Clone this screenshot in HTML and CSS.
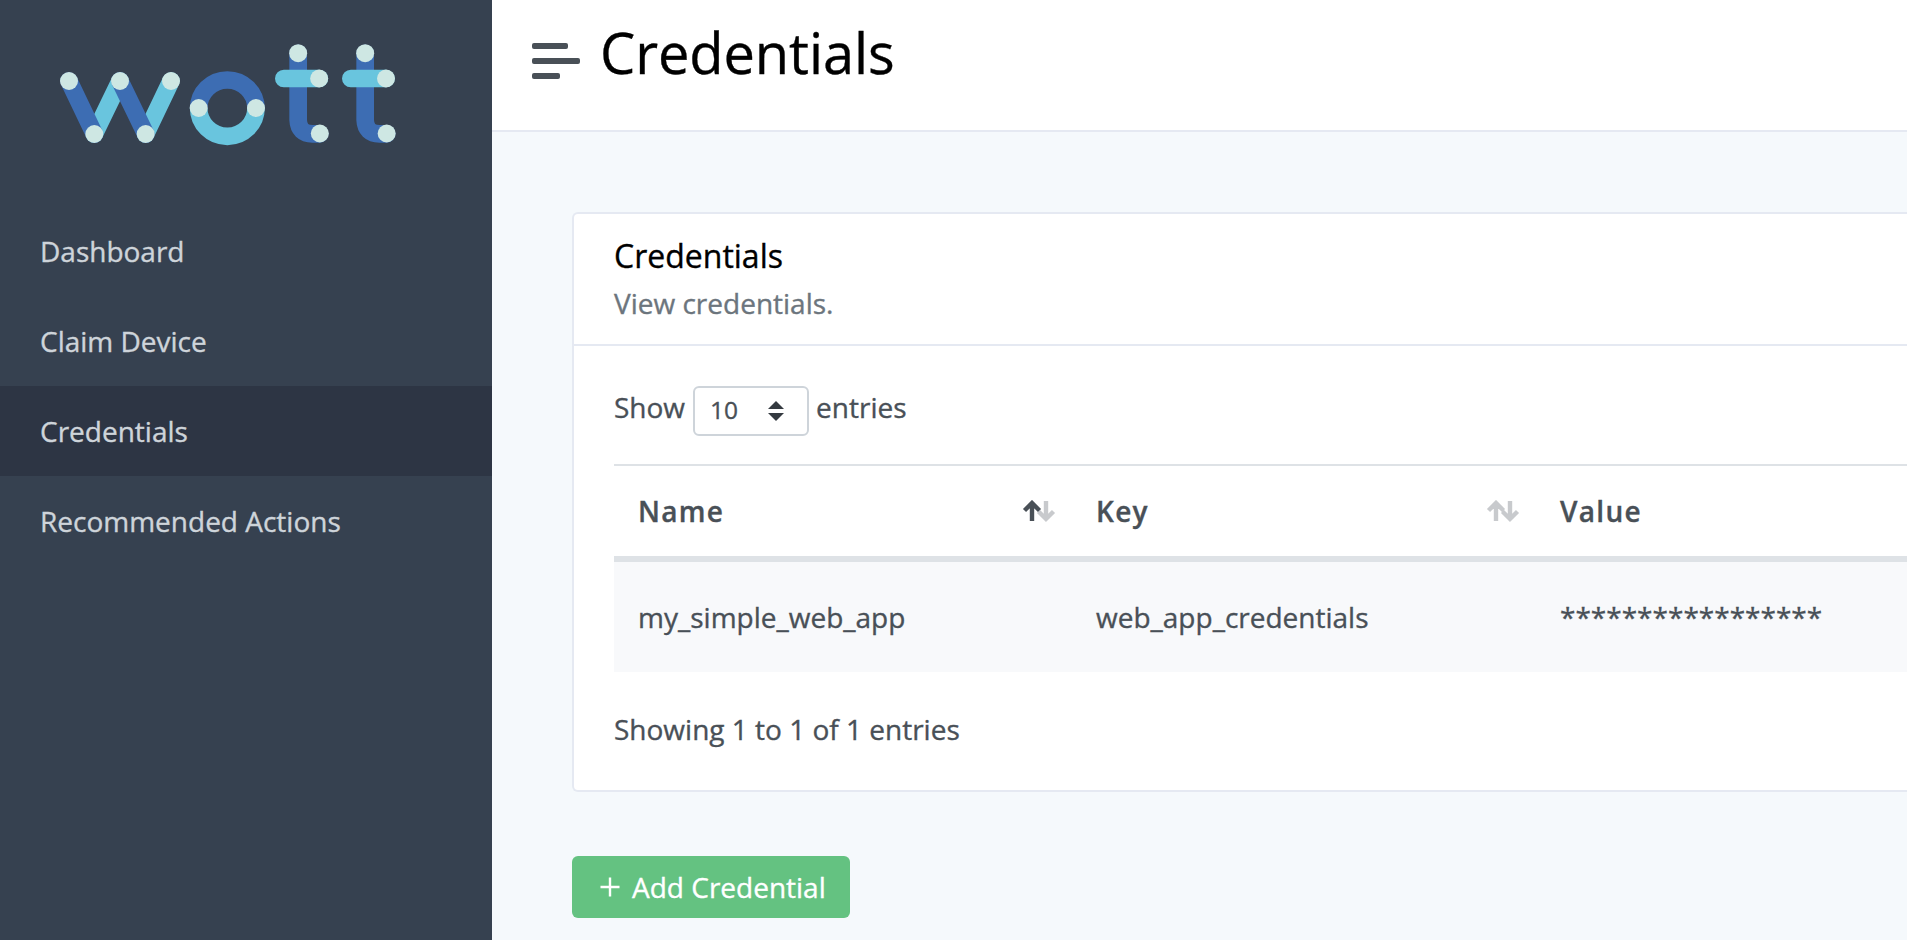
FILE: index.html
```html
<!DOCTYPE html>
<html lang="en">
<head>
<meta charset="utf-8">
<title>Credentials</title>
<link rel="stylesheet" href="styles.css">
</head>
<body>
<div class="app">
  <aside class="sidebar">
    <a class="brand" aria-label="wott">
      <svg class="logo" viewBox="0 0 1140 390" width="380" height="130">
        <g fill="none" stroke-width="53" stroke-linecap="round">
          <path stroke="#69c5de" d="M240 153L163 312M393 153L317 312"/>
          <path stroke="#3d6db3" d="M87 153L163 312M240 153L317 312"/>
          <path stroke="#69c5de" stroke-linecap="butt" d="M476 234a86 85 0 0 0 172 0"/>
          <path stroke="#3d6db3" stroke-linecap="butt" d="M476 235a86 85 0 0 1 172 0"/>
          <path stroke="#3d6db3" d="M774.500 70V270Q776 311 818 311.500H839M975.500 70V270Q977 311 1019 311.500H1040"/>
          <path stroke="#69c5de" d="M731.500 145.500H838M932.500 145.500H1038"/>
        </g>
        <g fill="#cee7e3">
          <circle cx="87" cy="153" r="27"/><circle cx="163" cy="312" r="27"/>
          <circle cx="240" cy="153" r="27"/><circle cx="317" cy="312" r="27"/>
          <circle cx="393" cy="153" r="27"/><circle cx="476" cy="234" r="27"/>
          <circle cx="648" cy="234" r="27"/><circle cx="774.500" cy="69.500" r="27"/>
          <circle cx="837.500" cy="145.500" r="27"/><circle cx="839.500" cy="310.500" r="27"/>
          <circle cx="975.500" cy="69.500" r="27"/><circle cx="1038" cy="145.500" r="27"/>
          <circle cx="1040" cy="310.500" r="27"/>
        </g>
      </svg>
    </a>
    <nav class="nav">
      <a class="nav-link">Dashboard</a>
      <a class="nav-link">Claim Device</a>
      <a class="nav-link active">Credentials</a>
      <a class="nav-link">Recommended Actions</a>
    </nav>
  </aside>
  <div class="main">
    <header class="navbar">
      <div class="hamburger"><span class="bar bar-top"></span><span class="bar"></span><span class="bar bar-bottom"></span></div>
      <h1 class="page-title">Credentials</h1>
    </header>
    <main class="content">
      <section class="card">
        <div class="card-header">
          <h2 class="card-title">Credentials</h2>
          <p class="card-subtitle">View credentials.</p>
        </div>
        <div class="card-body">
          <div class="length">
            <span>Show</span>
            <div class="select"><span>10</span>
              <svg width="16" height="20" viewBox="0 0 16 20" fill="#343a40"><path d="M8 0L16 8H0zM8 20L0 12H16z"/></svg>
            </div>
            <span>entries</span>
          </div>
          <div class="table">
            <div class="row head">
              <div class="cell">Name
                <svg class="sort" width="34" height="24" viewBox="0 0 34 24" fill="none" stroke-width="4.400"><path stroke="#c8cacd" d="M24 1V20M16.500 11.500L24 19L31.500 11.500"/><path stroke="#495057" d="M10 21V3M2.500 10.500L10 3L17.500 10.500"/></svg>
              </div>
              <div class="cell">Key
                <svg class="sort" width="34" height="24" viewBox="0 0 34 24" fill="none" stroke-width="4.400"><path stroke="#c8cacd" d="M24 1V20M16.500 11.500L24 19L31.500 11.500M10 21V3M2.500 10.500L10 3L17.500 10.500"/></svg>
              </div>
              <div class="cell">Value</div>
            </div>
            <div class="row item">
              <div class="cell">my_simple_web_app</div>
              <div class="cell">web_app_credentials</div>
              <div class="cell">*****************</div>
            </div>
          </div>
          <p class="info">Showing 1 to 1 of 1 entries</p>
        </div>
      </section>
      <button class="btn">
        <svg width="20" height="20" viewBox="0 0 20 20" stroke="#fff" stroke-width="2.400"><path d="M10 0.500V19.500M0.500 10H19.500"/></svg>
        <span>Add Credential</span>
      </button>
    </main>
  </div>
</div>
</body>
</html>
```
FILE: styles.css
```css
* { box-sizing: border-box; }
body {
  margin: 0;
  font: 28px/42px "Open Sans", "Noto Sans", sans-serif;
  color: #495057;
  overflow: hidden;
  -webkit-text-stroke: 0.35px currentColor;
}
h1, h2, p { margin: 0; font-weight: 400; }
.app { display: flex; height: 940px; background: #f5f9fc; }

.sidebar { flex: 0 0 492px; background: #364150; }
.brand { display: block; height: 206px; padding: 30px 40px 0; }
.logo { display: block; }
.nav { display: flex; flex-direction: column; }
.nav-link { padding: 24px 40px; color: #ced4da; }
.nav-link.active { background: #2d3544; }

.main { flex: 1; min-width: 0; }
.navbar {
  display: flex;
  align-items: flex-start;
  gap: 20px;
  height: 132px;
  padding: 10px 40px 0;
  background: #fff;
  border-bottom: 2px solid #e5e9f2;
}
.hamburger { display: flex; flex-direction: column; gap: 9px; width: 48px; padding-top: 33px; }
.bar { width: 48px; height: 6px; border-radius: 2px; background: #495057; }
.bar-top { width: 36px; }
.bar-bottom { width: 28px; }
.page-title { font-size: 56px; line-height: 84px; letter-spacing: -0.1px; color: #000; }

.content { padding: 80px 0 0 80px; }
.card {
  height: 580px;
  background: #fff;
  border: 2px solid #e5e9f2;
  border-right: 0;
  border-radius: 6px 0 0 6px;
}
.card-header { padding: 18px 40px 20px; border-bottom: 2px solid #e5e9f2; }
.card-title { margin-bottom: 2px; font-size: 32px; line-height: 48px; color: #000; }
.card-subtitle { color: #6c757d; }
.card-body { padding: 40px 0 0 40px; }
.length { display: flex; align-items: flex-start; gap: 7px; }
.select {
  display: flex;
  justify-content: space-between;
  width: 116px;
  height: 50px;
  margin-left: 1px;
  padding: 0 23px 0 15px;
  border: 2px solid #ced4da;
  border-radius: 6px;
  font-size: 24.5px;
  line-height: 44px;
}
.select svg { margin-top: 13px; }

.table { margin-top: 28px; border-top: 2px solid #dee2e6; }
.row { display: grid; grid-template-columns: 458px 464px 1fr; }
.cell { display: flex; justify-content: space-between; padding: 0 16px 0 24px; }
.head { height: 96px; padding-top: 24px; border-bottom: 6px solid #dee2e6; font-weight: 600; letter-spacing: 1.3px; }
.sort { margin-top: 10px; }
.item { height: 110px; padding-top: 34px; background: #f8f9fb; }
.info { margin-top: 36px; }

.btn {
  display: flex;
  align-items: center;
  gap: 12px;
  width: 278px;
  height: 62px;
  margin-top: 64px;
  padding: 0 0 0 28px;
  border: 0;
  border-radius: 6px;
  background: #64c281;
  color: #fff;
  font: inherit;
}
```
